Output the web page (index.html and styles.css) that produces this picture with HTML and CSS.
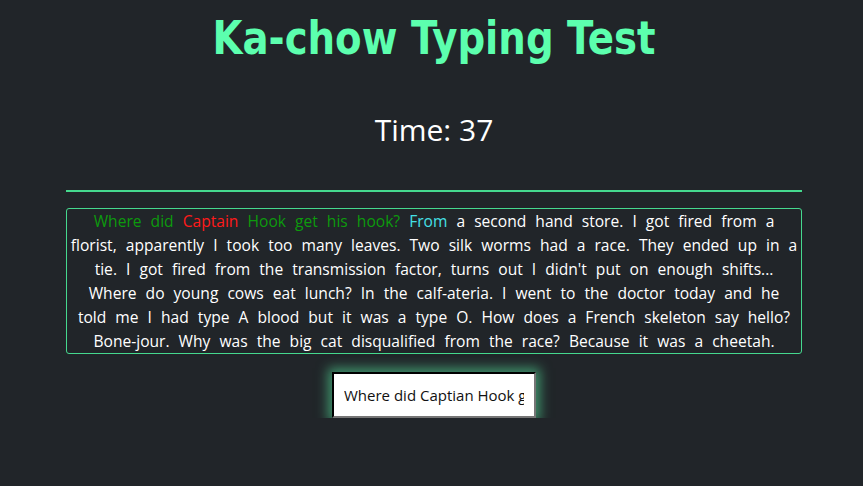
FILE: index.html
```html
<!DOCTYPE html>
<html>
<head>
<meta charset="utf-8">
<link rel="stylesheet" href="styles.css">
</head>
<body>
<main class="page">
  <h1 class="title">Ka-chow Typing Test</h1>
  <div class="timer">Time: 37</div>
  <hr class="rule">
  <div class="quote"><span class="ok">Where did</span> <span class="bad">Captain</span> <span class="ok">Hook get his hook?</span> <span class="cur">From</span> a second hand store. I got fired from a<br>florist, apparently I took too many leaves. Two silk worms had a race. They ended up in a<br>tie. I got fired from the transmission factor, turns out I didn't put on enough shifts...<br>Where do young cows eat lunch? In the calf-ateria. I went to the doctor today and he<br>told me I had type A blood but it was a type O. How does a French skeleton say hello?<br>Bone-jour. Why was the big cat disqualified from the race? Because it was a cheetah.</div>
  <div class="entry">
    <input class="field" type="text" value="Where did Captian Hook get his hook?">
  </div>
</main>
</body>
</html>
```
FILE: styles.css
```css
html, body {
  margin: 0;
  padding: 0;
  background: #212529;
}
body {
  font-family: "Open Sans", "Noto Sans", sans-serif;
  color: #ffffff;
}
.page {
  padding: 0 61px 0 66px;
  display: flex;
  flex-direction: column;
}
.title {
  margin: 10px 0 0;
  text-align: center;
  font-family: "Liberation Sans Narrow", "DejaVu Sans Condensed", sans-serif;
  font-weight: bold;
  font-size: 43px;
  line-height: 56px;
  color: #5cffae;
  transform: scaleY(1.08);
}
.timer {
  margin-top: 44px;
  text-align: center;
  font-size: 30px;
  line-height: 40px;
}
.rule {
  margin: 40px 0 0;
  border: 0;
  height: 2px;
  background: #45d98e;
}
.quote {
  margin-top: 16px;
  border: 1px solid #45d98e;
  border-radius: 3px;
  padding: 0 2px;
  text-align: center;
  font-size: 15.6px;
  line-height: 24px;
  word-spacing: 5px;
}
.ok { color: #0d9a0d; }
.bad { color: #ff1a1a; }
.cur { color: #45e0e6; }
.entry {
  display: flex;
  justify-content: center;
  margin-top: 18px;
}
.field {
  width: 204px;
  height: 46px;
  box-sizing: border-box;
  border: 2px inset #767676;
  border-top-color: #1b1b1b;
  border-left-color: #1b1b1b;
  padding: 0 10px;
  font-family: "Open Sans", sans-serif;
  font-size: 15px;
  color: #111;
  background: #fff;
  box-shadow: 0 0 11px 4px rgba(92, 255, 174, 0.5);
}
```
